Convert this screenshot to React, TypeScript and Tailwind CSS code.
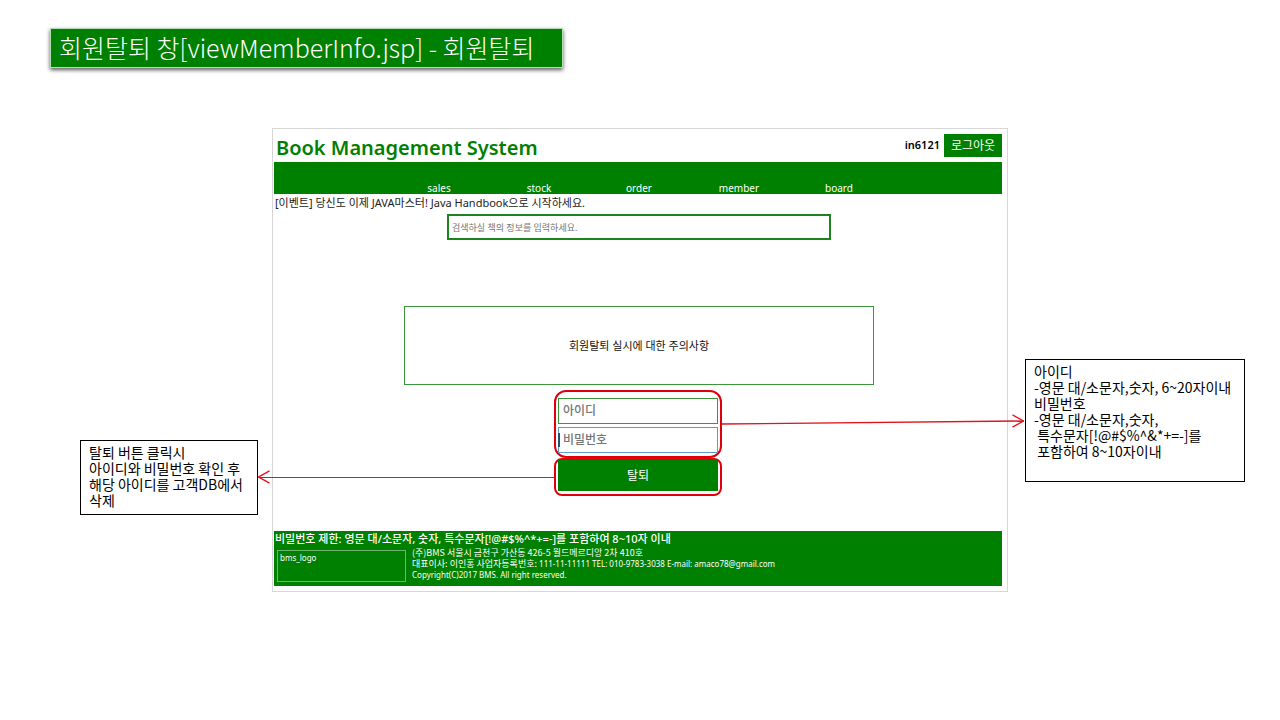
import type { ReactNode } from "react";

const NAV_ITEMS = ["sales", "stock", "order", "member", "board"];

function Note({ className, children }: { className: string; children: ReactNode }) {
  return (
    <aside
      className={`shrink-0 whitespace-pre border border-black bg-white px-2 py-[3px] font-['Noto_Sans_CJK_KR',sans-serif] text-[14px] leading-4 font-normal text-black ${className}`}
    >
      {children}
    </aside>
  );
}

function ArrowHead({ className }: { className: string }) {
  return (
    <svg className={className} width="12" height="14" viewBox="0 0 12 14" fill="none" stroke="#e8141c" strokeWidth="1.4">
      <path d="M0.5 0.8 L11.3 7 L0.5 13.2" />
    </svg>
  );
}

function SiteHeader() {
  return (
    <header>
      <div className="flex h-8 items-start justify-between pt-0.5 pl-0.5">
        <h2 className="text-[20px] leading-8 font-semibold text-[#008000]">Book Management System</h2>
        <div className="flex items-center gap-1 pt-0.5">
          <span className="text-[11px] font-semibold text-black">in6121</span>
          <button type="button" className="h-[23px] w-[58px] bg-[#008000] text-[12px] text-white">
            로그아웃
          </button>
        </div>
      </div>
      <nav className="flex h-8 items-end justify-center bg-[#008000] pl-0.5">
        {NAV_ITEMS.map((item) => (
          <a key={item} href={`#${item}`} className="w-[100px] text-center text-[10px] leading-3 text-white">
            {item}
          </a>
        ))}
      </nav>
    </header>
  );
}

function WithdrawForm() {
  return (
    <form className="mt-[5px] grid grid-cols-[1fr_168px_1fr]">
      <div className="relative">
        <div className="absolute top-[87px] right-0 -left-4 h-px bg-[#e8141c]" />
        <ArrowHead className="absolute top-[80px] -left-4 rotate-180" />
      </div>
      <div>
        <div className="flex flex-col gap-[3px] rounded-xl border-2 border-[#e0000c] px-0.5 pt-1.5 pb-[3px]">
          <input
            type="text"
            aria-label="아이디"
            placeholder="아이디"
            className="h-[26px] w-full border border-[#3b963b] px-1 pb-0.5 text-[12px] font-medium text-black outline-none placeholder:text-[#757575]"
          />
          <div className="relative flex">
            <input
              type="password"
              aria-label="비밀번호"
              placeholder="비밀번호"
              className="h-[26px] w-full border border-[#5f9bc4] px-1 pb-0.5 text-[12px] font-medium text-black outline-none placeholder:text-[#757575]"
            />
            <span className="absolute top-1.5 left-0 h-3.5 w-0.5 bg-[#26506b]" />
          </div>
        </div>
        <div className="rounded-lg border-2 border-[#e0000c] px-0.5 pb-[3px]">
          <button type="submit" className="block h-[31px] w-full bg-[#008000] text-[12px] text-white">
            탈퇴
          </button>
        </div>
      </div>
      <div className="relative">
        <svg className="absolute top-7 left-0 h-2 w-[calc(100%+22px)] overflow-visible" stroke="#e0141c" strokeWidth="1.4">
          <line x1="0" y1="6" x2="100%" y2="3" />
        </svg>
        <ArrowHead className="absolute top-6 -right-[22px]" />
      </div>
    </form>
  );
}

function SiteFooter() {
  return (
    <footer className="h-[55px] bg-[#008000] text-white">
      <p className="pl-px text-[11px] leading-4 font-medium">
        비밀번호 제한: 영문 대/소문자, 숫자, 특수문자[!@#$%^*+=-]를 포함하여 8~10자 이내
      </p>
      <div className="flex gap-1.5 pl-[3px]">
        <div className="mt-[3px] h-8 w-[129px] border border-[#6cb56c] px-0.5 pt-px text-[8px] leading-3">bms_logo</div>
        <address className="text-[8px] leading-[11px] not-italic">
          <p className="font-['Noto_Sans_CJK_KR',sans-serif] text-[9px] leading-[11px]">
            (주)BMS 서울시 금천구 가산동 426-5 월드메르디앙 2차 410호
          </p>
          <p>
            <span className="font-['Noto_Sans_CJK_KR',sans-serif] text-[9px] leading-[11px]">
              대표이사: 이인홍 사업자등록번호:
            </span>{" "}
            111-11-11111 TEL: 010-9783-3038 E-mail: amaco78@gmail.com
          </p>
          <p>Copyright(C)2017 BMS. All right reserved.</p>
        </address>
      </div>
    </footer>
  );
}

export default function App() {
  return (
    <div className="min-h-screen bg-white pt-7 font-['Noto_Sans','Noto_Sans_CJK_KR',sans-serif]">
      <h1 className="ml-[50px] w-fit border border-[#b8dcb8] bg-[#008000] pr-7 pb-0.5 pl-2 font-['Noto_Sans_CJK_KR',sans-serif] text-[25px] leading-9 font-light text-white shadow-[0_2px_4px_rgba(0,0,0,0.65)]">
        회원탈퇴 창[viewMemberInfo.jsp] - 회원탈퇴
      </h1>
      <div className="mt-15 flex items-start pr-[35px] pl-20">
        <Note className="mt-[312px] mr-3.5 h-[75px] w-[178px]">
          {"탈퇴 버튼 클릭시\n아이디와 비밀번호 확인 후\n해당 아이디를 고객DB에서\n삭제"}
        </Note>
        <main className="min-w-0 flex-1 border border-[#d6d6d6] pt-px pr-[5px] pb-[5px] pl-px">
          <SiteHeader />
          <p className="pl-px text-[11px] leading-[18px] text-[#222222]">
            [이벤트] 당신도 이제 JAVA마스터! Java Handbook으로 시작하세요.
          </p>
          <div className="pl-0.5">
            <input
              type="search"
              aria-label="도서 검색"
              placeholder="검색하실 책의 정보를 입력하세요."
              className="mx-auto mt-0.5 block h-[26px] w-[384px] border-2 border-[#1c841c] px-[3px] text-[9px] text-black outline-none placeholder:text-[#757575]"
            />
            <section className="mx-auto mt-[66px] flex h-[79px] w-[470px] items-center justify-center border border-[#3b963b] pt-0.5 text-[11px] text-[#111111]">
              회원탈퇴 실시에 대한 주의사항
            </section>
          </div>
          <WithdrawForm />
          <div className="mt-[35px]">
            <SiteFooter />
          </div>
        </main>
        <Note className="mt-[231px] ml-[17px] h-[123px] w-[220px]">
          {"아이디\n-영문 대/소문자,숫자, 6~20자이내\n비밀번호\n-영문 대/소문자,숫자,\n 특수문자[!@#$%^&*+=-]를\n 포함하여 8~10자이내"}
        </Note>
      </div>
    </div>
  );
}
